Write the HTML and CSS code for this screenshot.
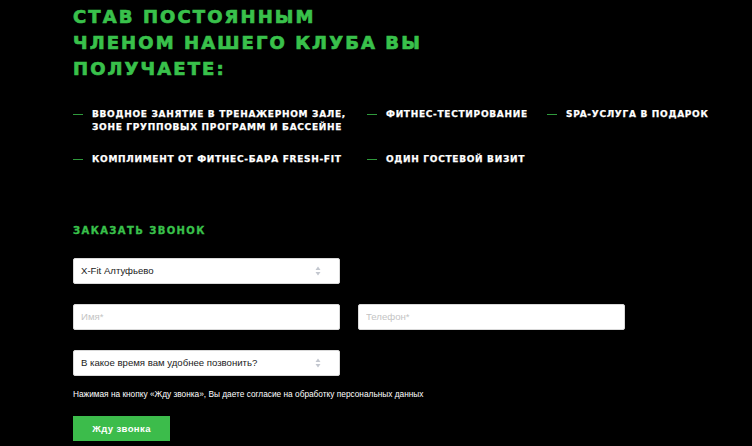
FILE: index.html
```html
<!DOCTYPE html>
<html lang="ru">
<head>
<meta charset="utf-8">
<title>Клуб</title>
<link rel="stylesheet" href="styles.css">
</head>
<body>
<div class="page">
  <h1 class="title">СТАВ ПОСТОЯННЫМ<br>ЧЛЕНОМ НАШЕГО КЛУБА ВЫ<br>ПОЛУЧАЕТЕ:</h1>
  <ul class="benefits">
    <li class="benefit">ВВОДНОЕ ЗАНЯТИЕ В ТРЕНАЖЕРНОМ ЗАЛЕ,<br>ЗОНЕ ГРУППОВЫХ ПРОГРАММ И БАССЕЙНЕ</li>
    <li class="benefit">ФИТНЕС-ТЕСТИРОВАНИЕ</li>
    <li class="benefit">SPA-УСЛУГА В ПОДАРОК</li>
    <li class="benefit">КОМПЛИМЕНТ ОТ ФИТНЕС-БАРА FRESH-FIT</li>
    <li class="benefit">ОДИН ГОСТЕВОЙ ВИЗИТ</li>
  </ul>
  <h2 class="subtitle">ЗАКАЗАТЬ ЗВОНОК</h2>
  <form class="form">
    <div class="row">
      <div class="field select">
        <span class="value">X-Fit Алтуфьево</span>
        <svg class="arrows" width="6" height="10" viewBox="0 0 6 10"><path d="M3 0.5 L5.5 4 H0.5 Z M3 9.5 L5.5 6 H0.5 Z" fill="#c3c7cf"/></svg>
      </div>
    </div>
    <div class="row">
      <input class="field" type="text" placeholder="Имя*">
      <input class="field" type="text" placeholder="Телефон*">
    </div>
    <div class="row">
      <div class="field select">
        <span class="value">В какое время вам удобнее позвонить?</span>
        <svg class="arrows" width="6" height="10" viewBox="0 0 6 10"><path d="M3 0.5 L5.5 4 H0.5 Z M3 9.5 L5.5 6 H0.5 Z" fill="#c3c7cf"/></svg>
      </div>
    </div>
    <p class="consent">Нажимая на кнопку «Жду звонка», Вы даете согласие на обработку персональных данных</p>
    <button class="btn" type="button">Жду звонка</button>
  </form>
</div>
</body>
</html>
```

FILE: styles.css
```css
* { box-sizing: border-box; }
html, body { margin: 0; padding: 0; background: #000; }
body { width: 752px; height: 446px; overflow: hidden; }
.page {
  padding: 4px 0 0 73px;
  font-family: "Liberation Sans", Arial, sans-serif;
  color: #fff;
}
.title {
  margin: 0;
  font-family: "DejaVu Sans", sans-serif;
  font-weight: 700;
  font-size: 18px;
  line-height: 26px;
  letter-spacing: 2.1px;
  color: #39c14b;
  -webkit-text-stroke: 0.7px #39c14b;
}
.benefits {
  list-style: none;
  margin: 26px 0 0 0;
  padding: 0;
  display: grid;
  grid-template-columns: 294px 180px auto;
  row-gap: 20px;
}
.benefit {
  position: relative;
  padding-left: 19px;
  font-family: "DejaVu Sans", sans-serif;
  font-weight: 700;
  font-size: 9px;
  line-height: 12.5px;
  letter-spacing: 0.7px;
  color: #fff;
  -webkit-text-stroke: 0.25px #fff;
}
.benefit::before {
  content: "";
  position: absolute;
  left: 0;
  top: 6px;
  width: 10px;
  height: 1px;
  background: #2f9a3c;
}
.subtitle {
  margin: 59px 0 0 0;
  font-family: "DejaVu Sans", sans-serif;
  font-weight: 700;
  font-size: 10px;
  line-height: 12px;
  letter-spacing: 1.4px;
  color: #39c14b;
  -webkit-text-stroke: 0.3px #39c14b;
}
.form { margin-top: 21px; }
.row {
  display: flex;
  gap: 18px;
  margin-bottom: 20px;
}
.field {
  width: 267px;
  height: 26px;
  background: #fff;
  border: 1px solid #d9d9d9;
  border-radius: 2px;
  font-family: "Liberation Sans", Arial, sans-serif;
  font-size: 9.6px;
  color: #222;
  padding: 0 7px;
  outline: none;
}
.field::placeholder { color: #c4c4c4; }
.select {
  display: flex;
  align-items: center;
  justify-content: space-between;
  padding: 0 18px 0 7px;
}
.arrows { display: block; }
.consent {
  margin: -8px 0 0 0;
  font-size: 8.3px;
  line-height: 12px;
  color: #fff;
}
.btn {
  margin-top: 16px;
  width: 97px;
  height: 25px;
  border: 0;
  background: #3cbc4b;
  color: #fff;
  font-family: "Liberation Sans", Arial, sans-serif;
  font-weight: 700;
  font-size: 9.5px;
  letter-spacing: 0.4px;
  padding: 0;
}
```
